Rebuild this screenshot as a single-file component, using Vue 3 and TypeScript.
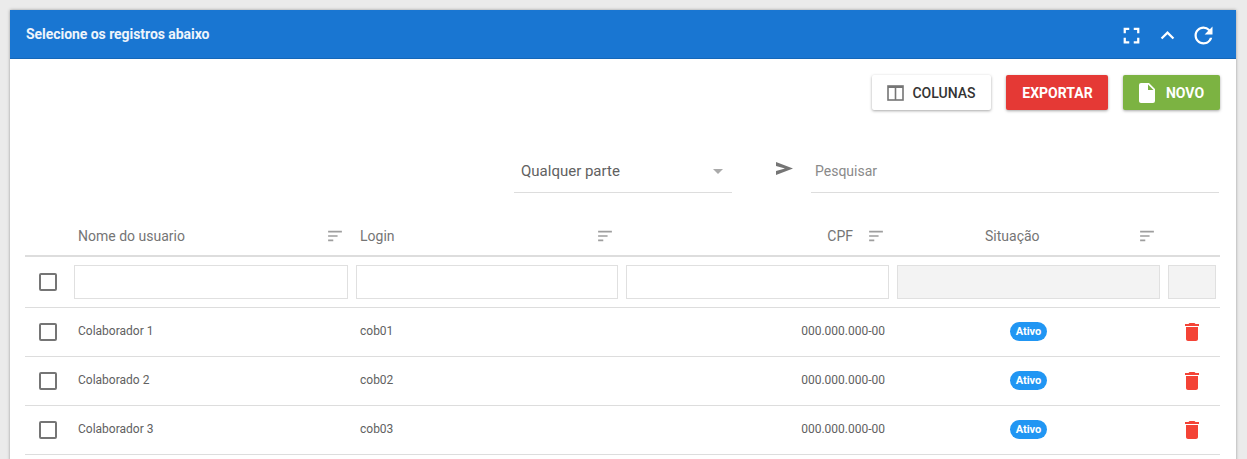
<script setup lang="ts">
interface Row { nome: string; login: string }
const rows: Row[] = [
  { nome: 'Colaborador 1', login: 'cob01' },
  { nome: 'Colaborado 2', login: 'cob02' },
  { nome: 'Colaborador 3', login: 'cob03' },
]
</script>

<template>
  <div class="page">
    <section class="card">
      <header class="head">
        <h1 class="title">Selecione os registros abaixo</h1>
        <div class="head-icons">
          <svg width="27" height="27" viewBox="0 0 24 24" fill="#fff"><path d="M5 5h5v2H7v3H5V5zm9 0h5v5h-2V7h-3V5zM5 14h2v3h3v2H5v-5zm12 0h2v5h-5v-2h3v-3z" /></svg>
          <svg width="27" height="27" viewBox="0 0 24 24" fill="#fff"><path d="M7.41 15.41 12 10.83l4.59 4.58L18 14l-6-6-6 6z" /></svg>
          <svg width="27" height="27" viewBox="0 0 24 24" fill="#fff"><path d="M17.65 6.35A7.958 7.958 0 0 0 12 4c-4.42 0-7.99 3.58-7.99 8s3.57 8 7.99 8c3.730 0 6.840-2.550 7.730-6h-2.080A5.990 5.990 0 0 1 12 18c-3.310 0-6-2.690-6-6s2.690-6 6-6c1.660 0 3.140.69 4.220 1.780L13 11h7V4l-2.350 2.350z" /></svg>
        </div>
      </header>
      <div class="body">
        <div class="actions">
          <button class="btn btn-white">
            <svg width="20" height="20" viewBox="0 0 20 20" fill="none" stroke="#757575" stroke-width="1.6"><rect x="2" y="3" width="15" height="14" /><path d="M9.5 3v14" /><path d="M2 4h15" stroke-width="2" /></svg>
            <span>COLUNAS</span>
          </button>
          <button class="btn btn-red">EXPORTAR</button>
          <button class="btn btn-green">
            <svg width="24" height="24" viewBox="0 0 24 24" fill="#fff"><path d="M6 2a2 2 0 0 0-2 2v16c0 1.100.9 2 2 2h12a2 2 0 0 0 2-2V8l-6-6H6zm7 7V3.500L18.500 9H13z" /></svg>
            <span>NOVO</span>
          </button>
        </div>
        <div class="search">
          <div class="select">
            <span>Qualquer parte</span>
            <i class="caret"></i>
          </div>
          <svg class="send" width="17" height="15" viewBox="0 0 17 15" fill="#757575"><path d="M0 1l17 6.500L0 14v-4l9-2.500L0 5z" /></svg>
          <div class="query">Pesquisar</div>
        </div>
        <div class="grid thead">
          <div></div>
          <div class="th"><span>Nome do usuario</span><svg class="sort" width="24" height="24" viewBox="0 0 24 24" fill="#9e9e9e"><path d="M4 6h16v2H4zm0 5h11v2H4zm0 5h6v2H4z" /></svg></div>
          <div class="th"><span>Login</span><svg class="sort" width="24" height="24" viewBox="0 0 24 24" fill="#9e9e9e"><path d="M4 6h16v2H4zm0 5h11v2H4zm0 5h6v2H4z" /></svg></div>
          <div class="th th-right"><span>CPF</span><svg class="sort" width="24" height="24" viewBox="0 0 24 24" fill="#9e9e9e"><path d="M4 6h16v2H4zm0 5h11v2H4zm0 5h6v2H4z" /></svg></div>
          <div class="th th-center"><span>Situação</span><svg class="sort" width="24" height="24" viewBox="0 0 24 24" fill="#9e9e9e"><path d="M4 6h16v2H4zm0 5h11v2H4zm0 5h6v2H4z" /></svg></div>
          <div></div>
        </div>
        <div class="grid filter">
          <div class="cell-check"><i class="check"></i></div>
          <div class="box"></div>
          <div class="box"></div>
          <div class="box"></div>
          <div class="box box-off"></div>
          <div class="box box-off"></div>
        </div>
        <div v-for="row in rows" :key="row.login" class="grid row">
          <div class="cell-check"><i class="check"></i></div>
          <div class="td">{{ row.nome }}</div>
          <div class="td">{{ row.login }}</div>
          <div class="td td-right">000.000.000-00</div>
          <div class="td td-center"><span class="badge">Ativo</span></div>
          <div class="td-trash">
            <svg width="24" height="24" viewBox="0 0 24 24" fill="#f44336"><path d="M6 19c0 1.100.9 2 2 2h8c1.100 0 2-.9 2-2V7H6v12zM19 4h-3.500l-1-1h-5l-1 1H5v2h14V4z" /></svg>
          </div>
        </div>
      </div>
    </section>
  </div>
</template>

<style>
html, body { margin: 0; height: 459px; overflow: hidden; background: #ebebeb; }
</style>

<style scoped>
.page {
  padding: 10px 11px 0 10px;
  height: 449px;
  overflow: hidden;
  font-family: Roboto, "Liberation Sans", sans-serif;
}
.card {
  background: #fff;
  box-shadow: 0 0 3px rgba(0, 0, 0, 0.35);
  height: 600px;
}
.head {
  height: 49px;
  background: #1976d2;
  display: flex;
  align-items: center;
  justify-content: space-between;
  padding: 0 19px 0 16px;
  box-shadow: inset 0 -1px 0 rgba(0, 0, 0, 0.12);
}
.title {
  margin: 0 0 2px;
  font-size: 14px;
  font-weight: 700;
  color: #eef4fb;
  letter-spacing: -0.05px;
}
.head-icons {
  display: flex;
  gap: 9px;
  margin-top: 2px;
}
.body {
  padding: 16px 16px 0 15px;
}
.actions {
  display: flex;
  justify-content: flex-end;
  gap: 15px;
  height: 35px;
}
.btn {
  border: 0;
  border-radius: 2px;
  height: 35px;
  padding: 0;
  display: flex;
  align-items: center;
  justify-content: center;
  font-family: inherit;
  font-size: 14px;
  font-weight: 500;
  box-shadow: 0 1px 3px rgba(0, 0, 0, 0.35);
}
.btn-white { width: 119px; background: #fff; color: #333; gap: 6px; padding-right: 1px; }
.btn-red { width: 102px; background: #e53935; color: #fff; font-weight: 700; padding-left: 1px; }
.btn-green { width: 97px; background: #7cb342; color: #fff; gap: 7px; font-weight: 700; padding-right: 4px; }
.search {
  display: flex;
  justify-content: flex-end;
  align-items: flex-start;
  height: 72px;
  margin-top: 35px;
  margin-right: 1px;
}
.select {
  width: 218px;
  height: 48px;
  box-sizing: border-box;
  border-bottom: 1px solid #ddd;
  padding: 14px 9px 0 7px;
  display: flex;
  justify-content: space-between;
  font-size: 15px;
  line-height: 24px;
  color: #616161;
}
.caret {
  width: 0;
  height: 0;
  margin-top: 10px;
  border-left: 5px solid transparent;
  border-right: 5px solid transparent;
  border-top: 5px solid #aaa;
}
.send {
  margin: 16px 18px 0 44px;
}
.query {
  width: 408px;
  height: 48px;
  box-sizing: border-box;
  border-bottom: 1px solid #ddd;
  padding: 14px 4px 0;
  font-size: 14px;
  line-height: 24px;
  color: #8a8a8a;
}
.grid {
  display: grid;
  grid-template-columns: 45px 282px 270px 271px 271px 56px;
}
.thead {
  height: 38px;
  border-bottom: 2px solid #ddd;
  align-items: start;
}
.th {
  display: flex;
  align-items: center;
  justify-content: space-between;
  height: 36px;
  padding: 1px 8px 0;
  font-size: 14px;
  color: #757575;
  box-sizing: border-box;
}
.sort { flex: none; margin-right: -3px; transform: scale(0.86); }
.th-right { justify-content: flex-end; gap: 11px; }
.th-center { padding-left: 92px; }
.filter {
  height: 51px;
  box-sizing: border-box;
  border-bottom: 1px solid #ddd;
  align-items: start;
}
.box {
  margin: 8px 4px 0;
  height: 34px;
  box-sizing: border-box;
  border: 1px solid #e0e0e0;
  background: #fff;
}
.box-off { background: #f3f3f3; }
.cell-check {
  display: flex;
  align-items: center;
  height: 100%;
  padding-left: 14px;
}
.filter .cell-check { height: 50px; }
.check {
  width: 18px;
  height: 18px;
  box-sizing: border-box;
  border: 2px solid #757575;
  border-radius: 2px;
  display: block;
}
.row {
  height: 49px;
  box-sizing: border-box;
  border-bottom: 1px solid #ddd;
  align-items: center;
}
.td {
  padding: 0 8px 2px;
  font-size: 12px;
  color: #616161;
}
.td-right { text-align: right; }
.td-center { display: flex; justify-content: center; }
.td-trash { display: flex; justify-content: center; }
.badge {
  display: block;
  width: 37px;
  height: 19px;
  line-height: 19px;
  text-align: center;
  border-radius: 10px;
  background: #2196f3;
  color: #fff;
  font-size: 11px;
  font-weight: 700;
}
</style>
